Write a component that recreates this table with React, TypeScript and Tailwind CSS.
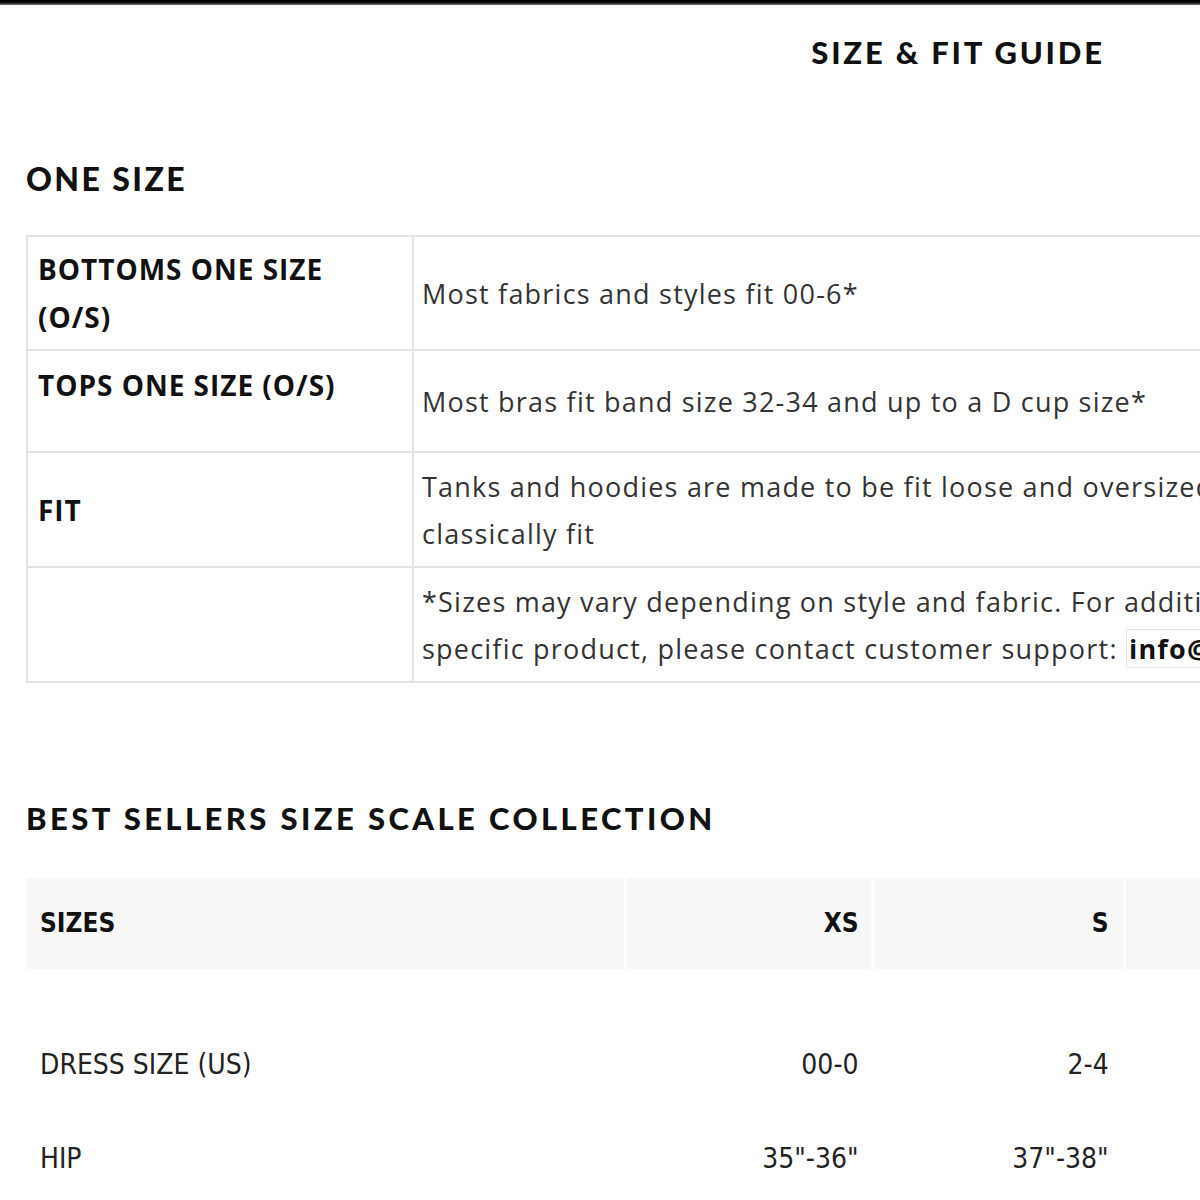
const heading = { fontFamily: "Lato, 'Noto Sans', sans-serif" };
const body = { fontFamily: "'Open Sans', Lato, sans-serif" };
const narrow = { fontFamily: "'Liberation Sans Narrow', 'DejaVu Sans Condensed', 'Liberation Sans', sans-serif" };

const oneSizeRows = [
  {
    label: ["BOTTOMS ONE SIZE", "(O/S)"],
    lines: ["Most fabrics and styles fit 00-6*"],
    h: "h-[114px]",
    top: false,
  },
  {
    label: ["TOPS ONE SIZE (O/S)"],
    lines: ["Most bras fit band size 32-34 and up to a D cup size*"],
    h: "h-[102px]",
    top: true,
  },
  {
    label: ["FIT"],
    lines: [
      "Tanks and hoodies are made to be fit loose and oversized, while bras and bottoms are",
      "classically fit",
    ],
    h: "h-[115px]",
    top: false,
  },
];

const sizes = [
  { label: "DRESS SIZE (US)", values: ["00-0", "2-4", "6-8", "10-12"] },
  { label: "HIP", values: ['35"-36"', '37"-38"', '39"-40"', '41"-42"'] },
];

export default function App() {
  return (
    <div className="w-[1200px] h-[1200px] overflow-hidden bg-white text-[#111]" style={heading}>
      <div className="h-[5px] bg-gradient-to-b from-black via-[#111] to-[#777]" />

      <div className="w-[1916px] text-center pt-[32px]">
        <h1 className="text-[31px] leading-none font-black tracking-[0.09em]">SIZE &amp; FIT GUIDE</h1>
      </div>

      <div className="pl-[26px] w-[1500px]">
        <h2 className="mt-[95px] text-[32px] leading-none font-black tracking-[0.075em]">ONE SIZE</h2>

        <div className="mt-[40px] border-2 border-[#e4e4e4] w-[1400px]" style={body}>
          {oneSizeRows.map((r, i) => (
            <div key={i} className={`flex ${r.h} border-b-2 border-[#e4e4e4]`}>
              <div
                className={`w-[386px] shrink-0 border-r-2 border-[#e4e4e4] pl-[10px] flex flex-col font-bold text-[28px] leading-[48px] tracking-[0.035em] ${
                  r.top ? "justify-start pt-[10px]" : "justify-center"
                }`}
              >
                {r.label.map((l) => (
                  <span key={l}>{l}</span>
                ))}
              </div>
              <div className="flex-1 pl-[8px] flex flex-col justify-center text-[27px] leading-[47px] tracking-[0.045em] text-[#333] whitespace-nowrap">
                {r.lines.map((l) => (
                  <span key={l}>{l}</span>
                ))}
              </div>
            </div>
          ))}
          <div className="flex h-[113px]">
            <div className="w-[386px] shrink-0 border-r-2 border-[#e4e4e4]" />
            <div className="flex-1 pl-[8px] flex flex-col justify-center text-[27px] leading-[47px] tracking-[0.045em] text-[#333] whitespace-nowrap">
              <span>*Sizes may vary depending on style and fabric. For additional sizing information on a</span>
              <span>
                specific product, please contact customer support:{" "}
                <span className="font-bold text-[#111] border border-[#e4e4e4] px-[2px]">info@shopstudio.com</span>
              </span>
            </div>
          </div>
        </div>

        <h2 className="mt-[120px] text-[31px] leading-none font-black tracking-[0.11em]">
          BEST SELLERS SIZE SCALE COLLECTION
        </h2>

        <table
          className="mt-[44px] -ml-[2px] w-[1600px] table-fixed border-separate border-spacing-x-[3px] border-spacing-y-0"
          style={narrow}
        >
          <colgroup>
            <col className="w-[597px]" />
            <col className="w-[243px]" />
            <col className="w-[249px]" />
            <col className="w-[246px]" />
            <col className="w-[246px]" />
          </colgroup>
          <thead>
            <tr className="h-[91px]">
              <th className="bg-[#f8f8f8] text-left pl-[13px] text-[26px] font-bold">SIZES</th>
              <th className="bg-[#f8f8f8] text-right pr-[12px] text-[26px] font-bold">XS</th>
              <th className="bg-[#f8f8f8] text-right pr-[14px] text-[26px] font-bold">S</th>
              <th className="bg-[#f8f8f8] text-right pr-[14px] text-[26px] font-bold">M</th>
              <th className="bg-[#f8f8f8] text-right pr-[14px] text-[26px] font-bold">L</th>
            </tr>
          </thead>
          <tbody>
            <tr className="h-[49px]">
              <td colSpan={5} />
            </tr>
            {sizes.map((row) => (
              <tr key={row.label} className="h-[94px] text-[28px] text-[#222]">
                <td className="pl-[13px]">{row.label}</td>
                {row.values.map((v, i) => (
                  <td key={v} className={`text-right ${i === 0 ? "pr-[12px]" : "pr-[14px]"}`}>
                    {v}
                  </td>
                ))}
              </tr>
            ))}
          </tbody>
        </table>
      </div>
    </div>
  );
}
